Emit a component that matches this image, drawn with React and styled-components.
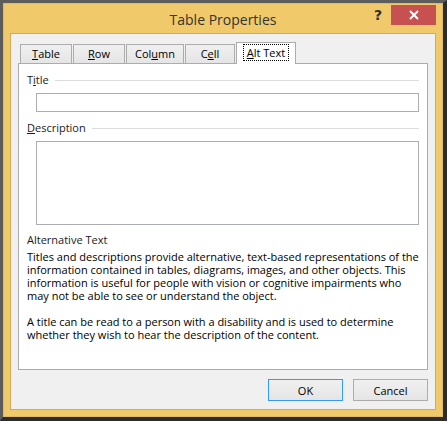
import React from 'react';
import styled, { createGlobalStyle } from 'styled-components';

const Global = createGlobalStyle`
  html, body {
    margin: 0;
    padding: 0;
    background: #ffffff;
  }
  body {
    font-family: "Open Sans", "Noto Sans", sans-serif;
    font-size: 11px;
    color: #1a1a1a;
  }
`;

const Ventana = styled.div`
  box-sizing: border-box;
  width: 447px;
  height: 421px;
  border-style: solid;
  border-width: 3px 4px 4px 3px;
  border-color: #5c5c5c #2c2c2c #2c2c2c #5c5c5c;
  background: #f0c96b;
  box-shadow: inset 0 0 0 1px #e2b95c;
  padding: 0 7px 7px 7px;
  display: flex;
  flex-direction: column;
`;

const BarraTitulo = styled.div`
  height: 30px;
  display: grid;
  grid-template-columns: 1fr auto 1fr;
  align-items: start;
`;

const Titulo = styled.div`
  grid-column: 2;
  font-size: 14px;
  line-height: 30px;
  padding-top: 2px;
  color: #333333;
`;

const Controles = styled.div`
  grid-column: 3;
  justify-self: end;
  display: flex;
  align-items: center;
  margin-top: 2px;
  height: 20px;
`;

const Ajuda = styled.div`
  width: 26px;
  text-align: center;
  font-family: "DejaVu Sans", sans-serif;
  font-weight: bold;
  font-size: 14px;
  color: #2e2e2e;
`;

const Fechar = styled.div`
  width: 45px;
  height: 20px;
  background: #c75050;
  display: flex;
  align-items: center;
  justify-content: center;
`;

const Corpo = styled.div`
  flex: 1;
  box-sizing: border-box;
  border: 1px solid #d1ac5c;
  background: #f0f0f0;
  padding: 8px 7px 8px 7px;
  display: flex;
  flex-direction: column;
`;

const Abas = styled.div`
  height: 22px;
  display: flex;
  align-items: flex-end;
  gap: 1px;
  padding-left: 2px;
  margin-bottom: -1px;
  position: relative;
  z-index: 1;
`;

const Aba = styled.div`
  box-sizing: border-box;
  width: ${p => p.w}px;
  height: ${p => (p.ativa ? 22 : 20)}px;
  border: 1px solid #acacac;
  border-bottom: ${p => (p.ativa ? 'none' : '1px solid #acacac')};
  background: ${p => (p.ativa ? '#ffffff' : 'linear-gradient(#f0f0f0, #e5e5e5)')};
  display: flex;
  align-items: center;
  justify-content: center;
  padding-bottom: ${p => (p.ativa ? 3 : 1)}px;
  color: #000000;
`;

const Foco = styled.span`
  outline: 1px dotted #000000;
  padding: 0 3px;
  line-height: 15px;
`;

const Painel = styled.div`
  box-sizing: border-box;
  height: 307px;
  border: 1px solid #acacac;
  background: #ffffff;
  padding: 9px 8px 0 8px;
  display: flex;
  flex-direction: column;
`;

const Cabecalho = styled.div`
  display: flex;
  align-items: center;
  gap: 6px;
  line-height: 14px;
  margin-top: ${p => p.mt || 0}px;

  &::after {
    content: "";
    flex: 1;
    height: 1px;
    background: #dcdcdc;
  }
`;

const Campo = styled.div`
  box-sizing: border-box;
  height: ${p => p.h}px;
  margin: 6px 0 0 9px;
  border: 1px solid #abadb3;
  background: #ffffff;
`;

const Rotulo = styled.div`
  margin-top: 8px;
  line-height: 14px;
`;

const Paragrafo = styled.p`
  margin: ${p => p.mt}px 0 0 0;
  line-height: 13px;
  white-space: nowrap;
  color: #000000;
`;

const Botoes = styled.div`
  display: flex;
  justify-content: flex-end;
  gap: 10px;
  margin-top: 9px;
`;

const Botao = styled.div`
  box-sizing: border-box;
  width: 75px;
  height: 22px;
  border: 1px solid ${p => (p.padrao ? '#3399ff' : '#acacac')};
  background: linear-gradient(#f0f0f0, #e5e5e5);
  display: flex;
  align-items: center;
  justify-content: center;
  color: #000000;
`;

const App = () => (
  <>
    <Global />
    <Ventana>
      <BarraTitulo>
        <Titulo>Table Properties</Titulo>
        <Controles>
          <Ajuda>?</Ajuda>
          <Fechar>
            <svg width="10" height="10" viewBox="0 0 10 10">
              <path d="M1 1 L9 9 M9 1 L1 9" stroke="#ffffff" strokeWidth="2" />
            </svg>
          </Fechar>
        </Controles>
      </BarraTitulo>
      <Corpo>
        <Abas>
          <Aba w={52}><span><u>T</u>able</span></Aba>
          <Aba w={52}><span><u>R</u>ow</span></Aba>
          <Aba w={58}><span>Col<u>u</u>mn</span></Aba>
          <Aba w={50}><span>C<u>e</u>ll</span></Aba>
          <Aba w={60} ativa><Foco><u>A</u>lt Text</Foco></Aba>
        </Abas>
        <Painel>
          <Cabecalho><span>T<u>i</u>tle</span></Cabecalho>
          <Campo h={19} />
          <Cabecalho mt={9}><span><u>D</u>escription</span></Cabecalho>
          <Campo h={84} />
          <Rotulo>Alternative Text</Rotulo>
          <Paragrafo mt={3}>
            Titles and descriptions provide alternative, text-based representations of the<br />
            information contained in tables, diagrams, images, and other objects. This<br />
            information is useful for people with vision or cognitive impairments who<br />
            may not be able to see or understand the object.
          </Paragrafo>
          <Paragrafo mt={13}>
            A title can be read to a person with a disability and is used to determine<br />
            whether they wish to hear the description of the content.
          </Paragrafo>
        </Painel>
        <Botoes>
          <Botao padrao>OK</Botao>
          <Botao>Cancel</Botao>
        </Botoes>
      </Corpo>
    </Ventana>
  </>
);

export default App;
